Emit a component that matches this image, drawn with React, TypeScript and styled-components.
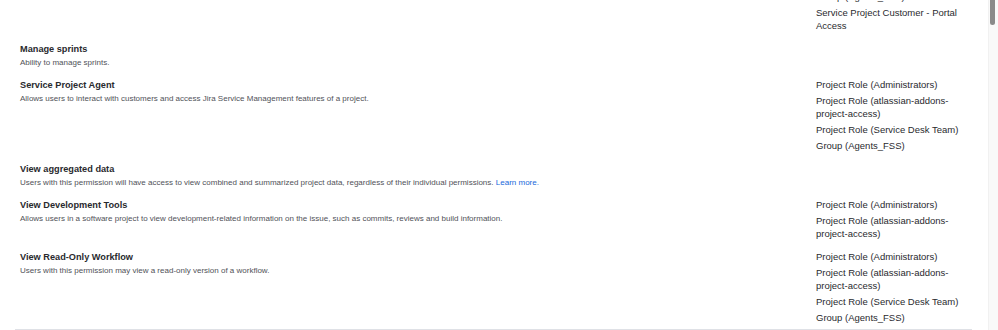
import React from 'react';
import styled, { createGlobalStyle } from 'styled-components';

const GlobalStyle = createGlobalStyle`
	html, body {
		margin: 0;
		padding: 0;
		background: #ffffff;
	}
	body {
		font-family: 'Liberation Sans', Arial, sans-serif;
		color: #292a2e;
	}
`;

type Permission = {
	title: string;
	description: string;
	link?: string;
	grants: string[];
};

const permissions: Permission[] = [
	{
		title: 'Browse Projects',
		description: 'Ability to browse projects and the issues within them.',
		grants: [
			'Project Role (Administrators)',
			'Project Role (Service Desk Team)',
			'Group (Agents_FSS)',
			'Service Project Customer - Portal Access',
		],
	},
	{
		title: 'Manage sprints',
		description: 'Ability to manage sprints.',
		grants: [],
	},
	{
		title: 'Service Project Agent',
		description: 'Allows users to interact with customers and access Jira Service Management features of a project.',
		grants: [
			'Project Role (Administrators)',
			'Project Role (atlassian-addons-project-access)',
			'Project Role (Service Desk Team)',
			'Group (Agents_FSS)',
		],
	},
	{
		title: 'View aggregated data',
		description:
			'Users with this permission will have access to view combined and summarized project data, regardless of their individual permissions.',
		link: 'Learn more.',
		grants: [],
	},
	{
		title: 'View Development Tools',
		description:
			'Allows users in a software project to view development-related information on the issue, such as commits, reviews and build information.',
		grants: ['Project Role (Administrators)', 'Project Role (atlassian-addons-project-access)'],
	},
	{
		title: 'View Read-Only Workflow',
		description: 'Users with this permission may view a read-only version of a workflow.',
		grants: [
			'Project Role (Administrators)',
			'Project Role (atlassian-addons-project-access)',
			'Project Role (Service Desk Team)',
			'Group (Agents_FSS)',
		],
	},
];

const App = () => {
	return (
		<>
			<GlobalStyle />
			<Viewport>
				<Content>
					<Table>
						{permissions.map((p) => (
							<Row key={p.title}>
								<PermissionCell>
									<Title>{p.title}</Title>
									<Description>
										{p.description}
										{p.link && (
											<>
												{' '}
												<LearnMore href="#">{p.link}</LearnMore>
											</>
										)}
									</Description>
								</PermissionCell>
								<GrantsCell>
									{p.grants.map((g, i) => (
										<Grant key={i}>{g}</Grant>
									))}
								</GrantsCell>
							</Row>
						))}
					</Table>
				</Content>
				<ScrollRail>
					<ScrollThumb />
				</ScrollRail>
			</Viewport>
		</>
	);
};

export default App;

const Viewport = styled.div`
	display: flex;
	width: 998px;
	height: 330px;
	overflow: hidden;
`;

const Content = styled.div`
	flex: 1;
	overflow: hidden;
	padding: 0 16px 0 15px;
`;

// scrolled down a little: the first row is mostly out of view
const Table = styled.div`
	margin-top: -47px;
	border-bottom: 2px solid #dfe1e6;
`;

const Row = styled.div`
	display: grid;
	grid-template-columns: 1fr 156px;
`;

const PermissionCell = styled.div`
	padding: 4px 5px;
`;

const Title = styled.div`
	font-size: 9.2px;
	font-weight: 700;
	line-height: 16px;
	color: #292a2e;
`;

const Description = styled.div`
	font-size: 8px;
	line-height: 12px;
	color: #505258;
`;

const LearnMore = styled.a`
	color: #1868db;
	text-decoration: none;
`;

const GrantsCell = styled.ul`
	list-style: none;
	margin: 0;
	padding: 4.5px 6px 5.5px 0;
`;

const Grant = styled.li`
	font-size: 9.5px;
	line-height: 13px;
	color: #292a2e;

	& + & {
		margin-top: 3px;
	}
`;

const ScrollRail = styled.div`
	width: 10px;
	flex-shrink: 0;
	background: #f9f9f9;
	border-left: 1px solid #f1f1f1;
	box-sizing: border-box;
	padding-left: 1px;
`;

const ScrollThumb = styled.div`
	width: 5px;
	height: 25px;
	background: #8a8a8a;
	border-radius: 0 0 3px 3px;
`;
